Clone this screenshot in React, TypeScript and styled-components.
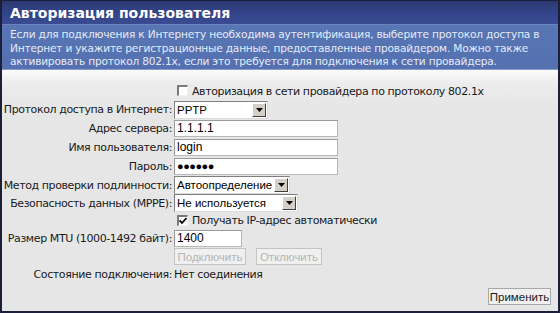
import React from "react";
import styled, { createGlobalStyle } from "styled-components";

const Global = createGlobalStyle`
  html, body { margin: 0; padding: 0; background: #ffffff; }
  body { font-family: "DejaVu Sans", Verdana, sans-serif; }
`;

const Frame = styled.div`
  width: 560px;
  height: 313px;
  box-sizing: border-box;
  border: 2px solid #1c1f3a;
  border-top-width: 1px;
  display: flex;
  flex-direction: column;
  background: #e6e6e6;
  overflow: hidden;
`;

const TitleBar = styled.div`
  height: 24px;
  flex: none;
  box-sizing: border-box;
  padding: 3px 0 0 8px;
  background: linear-gradient(180deg, #2c3a72 0%, #34448a 55%, #3a4b92 100%);
  border-bottom: 1px solid #6b84bf;
  color: #ffffff;
  font-family: "DejaVu Sans", Verdana, sans-serif;
  font-weight: bold;
  font-size: 14px;
  line-height: 18px;
`;

const Description = styled.div`
  flex: none;
  height: 45px;
  box-sizing: border-box;
  padding: 3px 8px 0 8px;
  background: linear-gradient(180deg, #5875b4 0%, #5470b0 100%);
  color: #e4ebf7;
  font-size: 10.6px;
  line-height: 13.5px;
  letter-spacing: -0.2px;
  white-space: nowrap;
  border-bottom: 1px solid #8a9ccc;
`;

const Body = styled.div`
  flex: 1;
  display: flex;
  flex-direction: column;
  padding-top: 12px;
  background: linear-gradient(180deg, #fbfbfb 0px, #ececec 14px, #e6e6e6 40px);
  font-size: 11px;
  color: #1a1a1a;
  letter-spacing: -0.4px;
`;

const Row = styled.div<{ $h: number }>`
  display: flex;
  align-items: center;
  height: ${(p) => p.$h}px;
`;

const Label = styled.div`
  width: 170px;
  flex: none;
  text-align: right;
  padding-right: 2px;
  white-space: nowrap;
`;

const Control = styled.div`
  display: flex;
  align-items: center;
  gap: 10px;
`;

const Input = styled.div<{ $w: number }>`
  width: ${(p) => p.$w}px;
  height: 17px;
  box-sizing: border-box;
  background: #ffffff;
  border: 1px solid #b8b8b8;
  border-top-color: #9a9a9a;
  border-left-color: #9a9a9a;
  font-family: "Liberation Sans", Arial, sans-serif;
  font-size: 12px;
  letter-spacing: 0;
  line-height: 15px;
  padding-left: 2px;
  color: #000;
`;

const Dots = styled.span`
  font-size: 11px;
  letter-spacing: -0.5px;
  font-weight: bold;
`;

const Select = styled.div<{ $w: number }>`
  width: ${(p) => p.$w}px;
  height: 18px;
  box-sizing: border-box;
  background: #ffffff;
  border: 1px solid #7f7f7f;
  border-right-color: #dcdcdc;
  border-bottom-color: #dcdcdc;
  display: flex;
  align-items: center;
  font-family: "Liberation Sans", Arial, sans-serif;
  font-size: 11.5px;
  letter-spacing: 0;
  color: #000;
`;

const SelectText = styled.span`
  flex: 1;
  padding-left: 2px;
  white-space: nowrap;
  overflow: hidden;
`;

const SelectBtn = styled.span`
  width: 14px;
  height: 14px;
  flex: none;
  margin-right: 1px;
  box-sizing: border-box;
  background: #d4d0c8;
  border: 1px solid #ffffff;
  border-right-color: #404040;
  border-bottom-color: #404040;
  display: flex;
  align-items: center;
  justify-content: center;
`;

const Check = styled.span`
  width: 11px;
  height: 11px;
  box-sizing: border-box;
  background: #ffffff;
  border-top: 2px solid #7a7a7a;
  border-left: 2px solid #7a7a7a;
  border-right: 1px solid #f2f2f2;
  border-bottom: 1px solid #f2f2f2;
  display: inline-flex;
  align-items: center;
  justify-content: center;
  margin: 0 4px 0 3px;
  vertical-align: -1px;
  flex: none;
`;

const CheckLabel = styled.span`
  white-space: nowrap;
`;

const Button = styled.div<{ $disabled?: boolean; $w: number }>`
  width: ${(p) => p.$w}px;
  height: 17px;
  box-sizing: border-box;
  background: #f0f0f0;
  border: 1px solid ${(p) => (p.$disabled ? "#c4c4c4" : "#a8a8a8")};
  font-family: "Liberation Sans", Arial, sans-serif;
  font-size: 11.5px;
  letter-spacing: 0;
  color: ${(p) => (p.$disabled ? "#b4b4b4" : "#1a1a1a")};
  display: flex;
  align-items: center;
  justify-content: center;
`;

const Footer = styled.div`
  display: flex;
  justify-content: flex-end;
  padding: 5px 7px 0 0;
`;

const Arrow = () => (
  <svg width="7" height="4" viewBox="0 0 7 4">
    <path d="M0 0h7L3.5 4z" fill="#000" />
  </svg>
);

const Tick = () => (
  <svg width="8" height="8" viewBox="0 0 8 8">
    <path d="M0.5 3.5L3 6L7.5 1" stroke="#000" strokeWidth="1.8" fill="none" />
  </svg>
);

export default function App() {
  return (
    <>
      <Global />
      <Frame>
        <TitleBar>Авторизация пользователя</TitleBar>
        <Description>
          Если для подключения к Интернету необходима аутентификация, выберите протокол доступа в
          <br />
          Интернет и укажите регистрационные данные, предоставленные провайдером. Можно также
          <br />
          активировать протокол 802.1x, если это требуется для подключения к сети провайдера.
        </Description>
        <Body>
          <Row $h={18}>
            <Label />
            <Control>
              <CheckLabel>
                <Check />
                Авторизация в сети провайдера по протоколу 802.1x
              </CheckLabel>
            </Control>
          </Row>
          <Row $h={19}>
            <Label>Протокол доступа в Интернет:</Label>
            <Select $w={94}>
              <SelectText>PPTP</SelectText>
              <SelectBtn><Arrow /></SelectBtn>
            </Select>
          </Row>
          <Row $h={19}>
            <Label>Адрес сервера:</Label>
            <Input $w={164}>1.1.1.1</Input>
          </Row>
          <Row $h={19}>
            <Label>Имя пользователя:</Label>
            <Input $w={164}>login</Input>
          </Row>
          <Row $h={19}>
            <Label>Пароль:</Label>
            <Input $w={164}><Dots>●●●●●●</Dots></Input>
          </Row>
          <Row $h={18}>
            <Label>Метод проверки подлинности:</Label>
            <Select $w={116}>
              <SelectText>Автоопределение</SelectText>
              <SelectBtn><Arrow /></SelectBtn>
            </Select>
          </Row>
          <Row $h={18}>
            <Label>Безопасность данных (MPPE):</Label>
            <Select $w={124}>
              <SelectText>Не используется</SelectText>
              <SelectBtn><Arrow /></SelectBtn>
            </Select>
          </Row>
          <Row $h={16}>
            <Label />
            <CheckLabel>
              <Check><Tick /></Check>
              Получать IP-адрес автоматически
            </CheckLabel>
          </Row>
          <Row $h={20}>
            <Label>Размер MTU (1000-1492 байт):</Label>
            <Input $w={68}>1400</Input>
          </Row>
          <Row $h={17}>
            <Label />
            <Control>
              <Button $disabled $w={72}>Подключить</Button>
              <Button $disabled $w={66}>Отключить</Button>
            </Control>
          </Row>
          <Row $h={18}>
            <Label>Состояние подключения:</Label>
            <Control>Нет соединения</Control>
          </Row>
          <Footer>
            <Button $w={63}>Применить</Button>
          </Footer>
        </Body>
      </Frame>
    </>
  );
}
